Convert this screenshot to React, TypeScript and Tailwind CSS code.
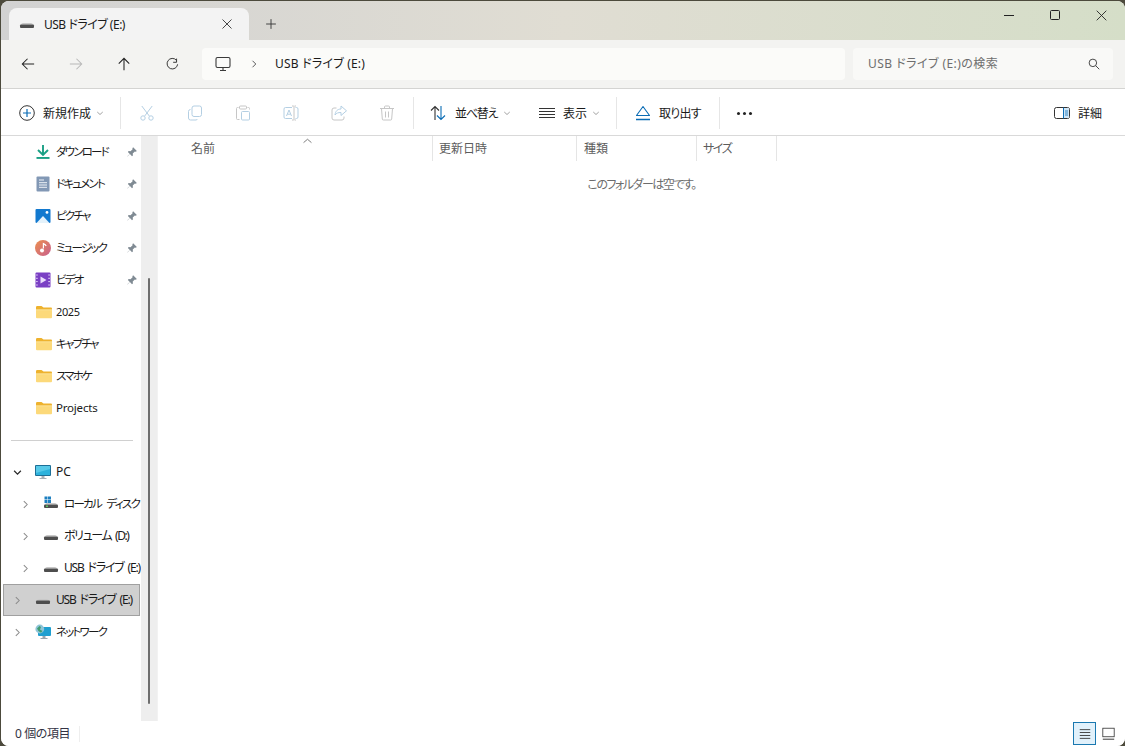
import React from "react";

const FONT = "font-['Noto_Sans','Noto_Sans_CJK_JP',sans-serif] [font-feature-settings:'palt']";

function Svg({ s = 16, children, className = "" }: { s?: number; children: React.ReactNode; className?: string }) {
  return (
    <svg width={s} height={s} viewBox="0 0 16 16" fill="none" className={"shrink-0 " + className}>
      {children}
    </svg>
  );
}

const Chev = () => (
  <Svg s={8}>
    <path d="M2.5 6 8 11l5.5-5" stroke="#8a8a8a" strokeWidth="1.6" />
  </Svg>
);

function Drive({ grid = false }: { grid?: boolean }) {
  return (
    <svg width="16" height="16" viewBox="0 0 16 16" className="shrink-0">
      {grid && (
        <g fill="#1c7fc0">
          <rect x="1.5" y="0.5" width="3" height="3" />
          <rect x="5" y="0.5" width="3" height="3" />
          <rect x="1.5" y="4" width="3" height="3" />
          <rect x="5" y="4" width="3" height="3" />
        </g>
      )}
      <path d="M2 8.5 Q2.4 7 4 7H12Q13.6 7 14 8.5Z" fill="#c8c8c8" />
      <rect x="1" y="8.5" width="14" height="3.5" rx="1" fill="#4e4e4e" />
      {grid && <rect x="3" y="9.5" width="2" height="1.5" fill="#58c060" />}
    </svg>
  );
}

function Folder() {
  return (
    <svg width="18" height="16" viewBox="0 0 18 16" className="shrink-0">
      <path d="M1 3.2Q1 2 2.2 2H6.5L8.5 3.6H16Q17 3.6 17 4.8V6H1Z" fill="#eeb22e" />
      <path d="M1 5.6H17V13.2Q17 14.2 16 14.2H2Q1 14.2 1 13.2Z" fill="#fcd97a" />
      <path d="M1 5.6H17V6.2H1Z" fill="#fbe9ae" />
    </svg>
  );
}

const Pin = () => (
  <Svg s={12}>
    <path d="M9.5 1.5 14.5 6.5 13 7.5 11.8 7.2 9 10 9.2 12.5 8 13.5 5.3 10.8 2 14 1.8 13.8 5 10.5 2.5 8 3.5 6.8 6 7 8.8 4.2 8.5 3Z" fill="#7f8a93" />
  </Svg>
);

const icons: Record<string, React.ReactNode> = {
  download: (
    <Svg>
      <path d="M8 1v9.5M3 6 8 11l5-5" stroke="#1aa085" strokeWidth="1.9" />
      <rect x="1.5" y="13" width="13" height="1.9" fill="#1aa085" />
    </Svg>
  ),
  doc: (
    <Svg>
      <rect x="1.5" y="0.5" width="13" height="15" rx="1" fill="#8298b5" />
      <path d="M4 4h5M4 6.7h8M4 9h8M4 11.3h8" stroke="#eef2f7" strokeWidth="1" />
    </Svg>
  ),
  pic: (
    <Svg>
      <rect x="0.5" y="1" width="15" height="14" rx="1" fill="#1279cf" />
      <path d="M1.5 15 8 8l6.5 7Z" fill="#e4f2fb" />
      <circle cx="12" cy="4.4" r="1.4" fill="#fff" />
    </Svg>
  ),
  music: (
    <svg width="16" height="16" viewBox="0 0 16 16" className="shrink-0">
      <defs>
        <linearGradient id="mus" x1="0" y1="0" x2="1" y2="1">
          <stop offset="0" stopColor="#ec8f4e" />
          <stop offset="1" stopColor="#c85f8e" />
        </linearGradient>
      </defs>
      <circle cx="8" cy="8" r="8" fill="url(#mus)" />
      <path d="M8.4 8.5V3.6c1.2.6 2.3 1.2 2.8 2.4" stroke="#fff" strokeWidth="1.2" fill="none" />
      <circle cx="7" cy="10.6" r="2" fill="#fff" />
    </svg>
  ),
  video: (
    <Svg>
      <rect x="0.5" y="0.5" width="15" height="15" rx="1" fill="#7a3fc4" />
      <path d="M1 3h1.8M1 6.3h1.8M1 9.6h1.8M1 13h1.8M13.2 3H15M13.2 6.3H15M13.2 9.6H15M13.2 13H15" stroke="#d9c5f3" strokeWidth="1" />
      <path d="M5.5 4.5 11.5 8l-6 3.5Z" fill="#e9dcfb" />
    </Svg>
  ),
  pc: (
    <Svg>
      <rect x="0" y="1" width="16" height="11" rx="1" fill="#1c6f97" />
      <rect x="1" y="2" width="14" height="9" fill="#2db2dc" />
      <path d="M1 2h14v3L1 9Z" fill="#7adcf2" opacity=".55" />
      <path d="M6.5 12h3v2h-3Z" fill="#a8b0b6" />
      <path d="M4.5 14.5h7" stroke="#a8b0b6" strokeWidth="1" />
    </Svg>
  ),
  net: (
    <Svg>
      <rect x="3" y="3" width="13" height="9" rx="1" fill="#1f9fd0" />
      <path d="M7.5 12h3v2h-3ZM5.5 14h7v1h-7Z" fill="#9aa5ad" />
      <circle cx="4.8" cy="5" r="4.4" fill="#8fc4d8" />
      <path d="M2 4.5 4.5 2 6 3 5 5.5 7.5 7 6 8.8 3.5 7Z" fill="#3f9c6f" />
    </Svg>
  ),
};

function NavRow({ icon, label, pin, text }: { icon: React.ReactNode; label: string; pin?: boolean; text: string }) {
  return (
    <div className="flex h-8 items-center pl-[34px] pr-[3px]">
      <span className="flex w-[21px] shrink-0">{icon}</span>
      <span className={"flex-1 whitespace-nowrap text-[#1a1a1a] " + text}>{label}</span>
      {pin && <span className="flex"><Pin /></span>}
    </div>
  );
}

function TreeRow({ label, icon, indent, expanded, text }: { label: string; icon: React.ReactNode; indent: boolean; expanded?: boolean; text: string }) {
  return (
    <div className={"flex h-8 items-center " + (indent ? "pl-[20px]" : "pl-[12px]")}>
      <span className="flex w-[22px] shrink-0">
        <Svg s={9}>
          {expanded ? (
            <path d="M2 5l6 6 6-6" stroke="#2a2a2a" strokeWidth="2.2" />
          ) : (
            <path d="M5 2l6 6-6 6" stroke="#8a8a8a" strokeWidth="1.8" />
          )}
        </Svg>
      </span>
      <span className="flex w-[21px] shrink-0">{icon}</span>
      <span className={"whitespace-nowrap text-[#1a1a1a] " + text}>{label}</span>
    </div>
  );
}

function Tool({ w, children }: { w: number; children: React.ReactNode }) {
  return (
    <div className="flex h-full shrink-0 items-center justify-center" style={{ width: w }}>
      {children}
    </div>
  );
}

const Div = () => <div className="h-[32px] w-px shrink-0 bg-[#e6e6e6]" />;

const disabled = "#b4cfe3";
const disabled2 = "#c6c6c6";

const kana = "text-[11.5px] tracking-[-1.8px]";
const usb = "text-[12px] tracking-[-1.2px] [word-spacing:2px]";

export default function App() {
  return (
    <div className={"h-[746px] w-[1125px] overflow-hidden bg-[#4c4a3c] " + FONT}>
      <div className="ml-px mt-px flex h-[745px] w-[1124px] flex-col overflow-hidden rounded-[8px] bg-white">
        {/* title bar */}
        <div className="flex h-[39px] shrink-0 bg-gradient-to-r from-[#d2d2d2] via-[#e0ddd3] to-[#d5dec8]">
          <div className="ml-[8px] mt-[7px] flex h-[32px] w-[240px] items-center rounded-t-[8px] bg-[#f3f3f3] pl-[10px]">
            <Drive />
            <span className="ml-[9px] flex-1 whitespace-nowrap pt-px text-[12px] tracking-[-0.5px] text-[#1a1a1a]">USB ドライブ (E:)</span>
            <span className="mr-[16px] flex">
              <Svg s={12}>
                <path d="M2 2l12 12M14 2 2 14" stroke="#333" strokeWidth="1.2" />
              </Svg>
            </span>
          </div>
          <div className="ml-[16px] mt-[7px] flex h-[32px] items-center">
            <Svg s={12}>
              <path d="M8 1.5v13M1.5 8h13" stroke="#333" strokeWidth="1.2" />
            </Svg>
          </div>
          <div className="ml-auto flex pr-px pt-[2px]">
            <div className="flex h-[24px] w-[46px] items-center justify-center">
              <div className="h-px w-[10px] bg-[#222]" />
            </div>
            <div className="flex h-[24px] w-[46px] items-center justify-center">
              <div className="h-[10px] w-[10px] rounded-[1.5px] border border-[#222]" />
            </div>
            <div className="flex h-[24px] w-[46px] items-center justify-center">
              <Svg s={11}>
                <path d="M1 1l14 14M15 1 1 15" stroke="#222" strokeWidth="1.3" />
              </Svg>
            </div>
          </div>
        </div>
        {/* address row */}
        <div className="flex h-[49px] shrink-0 items-center border-b border-[#d4d4d2] bg-[#f3f3f1]">
          <div className="ml-[3px] flex">
            <Tool w={48}>
              <Svg s={14}>
                <path d="M15 8H1.5M7.5 2l-6 6 6 6" stroke="#222" strokeWidth="1.2" />
              </Svg>
            </Tool>
            <Tool w={48}>
              <Svg s={14}>
                <path d="M1 8h13.5M8.5 2l6 6-6 6" stroke="#b8b8b8" strokeWidth="1.2" />
              </Svg>
            </Tool>
            <Tool w={48}>
              <Svg s={14}>
                <path d="M8 15V1.5M2 7.5l6-6 6 6" stroke="#222" strokeWidth="1.2" />
              </Svg>
            </Tool>
            <Tool w={48}>
              <Svg s={13}>
                <path d="M13 2v4.5H8.8M14.3 9a6.5 6.5 0 1 1-1.5-5" stroke="#333" strokeWidth="1.2" />
              </Svg>
            </Tool>
          </div>
          <div className="ml-[6px] flex h-[32px] w-[643px] items-center rounded-[4px] bg-[#fbfbf9] pl-[13px]">
            <Svg>
              <rect x="1" y="1.5" width="14" height="10" rx="1.5" stroke="#3a3a3a" strokeWidth="1.1" />
              <path d="M8 11.5v3M5 14.5h6" stroke="#3a3a3a" strokeWidth="1.1" />
            </Svg>
            <span className="ml-[19px] flex">
              <Svg s={8}>
                <path d="M5 1.5 11.5 8 5 14.5" stroke="#333" strokeWidth="1.6" />
              </Svg>
            </span>
            <span className="ml-[17px] whitespace-nowrap text-[12px] tracking-[0.2px] text-[#1a1a1a]">USB ドライブ (E:)</span>
          </div>
          <div className="ml-[8px] flex h-[32px] w-[260px] items-center rounded-[4px] bg-[#f9f9f7] pl-[15px] pr-[13px]">
            <span className="flex-1 whitespace-nowrap text-[12px] tracking-[0.45px] text-[#6e6e6e]">USB ドライブ (E:)の検索</span>
            <Svg s={12}>
              <circle cx="6.5" cy="6.5" r="5" stroke="#444" strokeWidth="1.3" />
              <path d="M10.2 10.2 15 15" stroke="#444" strokeWidth="1.3" />
            </Svg>
          </div>
        </div>
        {/* toolbar */}
        <div className="flex h-[47px] shrink-0 items-center border-b border-[#d9d9d9] bg-white pt-[2px]">
          <div className="flex h-full w-[119px] shrink-0 items-center pl-[18px]">
            <Svg>
              <circle cx="8" cy="8" r="7.3" stroke="#333" strokeWidth="1" />
              <path d="M8 4v8M4 8h8" stroke="#0a6cb5" strokeWidth="1.2" />
            </Svg>
            <span className="ml-[8px] whitespace-nowrap pt-px text-[12px] text-[#1a1a1a]">新規作成</span>
            <span className="ml-[5px] flex"><Chev /></span>
          </div>
          <Div />
          <div className="ml-[2px] flex h-full">
            <Tool w={48}>
              <Svg>
                <path d="M2.8 1l7.5 10M13.2 1 5.7 11" stroke={disabled} strokeWidth="1" />
                <circle cx="4" cy="13" r="2.2" stroke={disabled} />
                <circle cx="12" cy="13" r="2.2" stroke={disabled} />
              </Svg>
            </Tool>
            <Tool w={48}>
              <Svg>
                <rect x="5" y="1" width="9.5" height="10.5" rx="2" stroke={disabled} />
                <path d="M3.5 4.5A2 2 0 0 0 1.5 6.5v6.5a2 2 0 0 0 2 2h5.5a2 2 0 0 0 1.5-1" stroke={disabled} />
              </Svg>
            </Tool>
            <Tool w={48}>
              <Svg>
                <path d="M3.5 2.5h-1a1 1 0 0 0-1 1v10a1 1 0 0 0 1 1h2M12.5 2.5h1a1 1 0 0 1 1 1v1" stroke={disabled2} />
                <rect x="4.5" y="1" width="7" height="3" rx="1" stroke={disabled2} />
                <rect x="6.5" y="6.5" width="8" height="8.5" rx="1" stroke={disabled} />
              </Svg>
            </Tool>
            <Tool w={48}>
              <Svg>
                <path d="M9 2.5H2.5a1.5 1.5 0 0 0-1.5 1.5v8a1.5 1.5 0 0 0 1.5 1.5H9M12.5 2.5h1a1.5 1.5 0 0 1 1.5 1.5v8a1.5 1.5 0 0 1-1.5 1.5h-1" stroke={disabled} />
                <path d="M3.5 11 6 5l2.5 6M4.4 9.2h3.2" stroke={disabled} />
                <path d="M9 1h1.5a.5.5 0 0 1 .5.5v13a.5.5 0 0 1-.5.5H9M13 1h-1.5M13 15h-1.5" stroke={disabled2} />
              </Svg>
            </Tool>
            <Tool w={48}>
              <Svg>
                <path d="M5.5 3H3a2 2 0 0 0-2 2v8a2 2 0 0 0 2 2h8a2 2 0 0 0 2-2v-1.5" stroke={disabled2} />
                <path d="M10 1v3C6.5 4 4.5 6 4 10c1.5-2 3-2.5 6-2.5v3l5.5-4.7Z" stroke={disabled} strokeLinejoin="round" />
              </Svg>
            </Tool>
            <Tool w={48}>
              <Svg>
                <path d="M1 3.5h14M5.5 3.5V2a1 1 0 0 1 1-1h3a1 1 0 0 1 1 1v1.5M2.5 3.5l.8 10.5a1 1 0 0 0 1 1h7.4a1 1 0 0 0 1-1l.8-10.5M6.5 6.5v6M9.5 6.5v6" stroke={disabled2} />
              </Svg>
            </Tool>
          </div>
          <div className="ml-[2px]"><Div /></div>
          <div className="flex h-full w-[102px] shrink-0 items-center pl-[16px]">
            <Svg>
              <path d="M5 15V1.5M1 5.5l4-4 4 4" stroke="#333" strokeWidth="1.1" />
              <path d="M11 1v13.5M7 10.5l4 4 4-4" stroke="#0a6cb5" strokeWidth="1.1" />
            </Svg>
            <span className="ml-[9px] whitespace-nowrap pt-px text-[12px] tracking-[-1.2px] text-[#1a1a1a]">並べ替え</span>
            <span className="ml-[6px] flex"><Chev /></span>
          </div>
          <div className="flex h-full w-[100px] shrink-0 items-center pl-[23px]">
            <Svg>
              <path d="M0 3.5h16M0 6.5h16M0 9.5h16M0 12.5h16" stroke="#333" strokeWidth="1" />
            </Svg>
            <span className="ml-[8px] whitespace-nowrap pt-px text-[12px] text-[#1a1a1a]">表示</span>
            <span className="ml-[5px] flex"><Chev /></span>
          </div>
          <Div />
          <div className="flex h-full w-[102px] shrink-0 items-center pl-[18px]">
            <Svg>
              <path d="M8 1.5 14.5 10.5H1.5Z" stroke="#0a6cb5" strokeWidth="1.1" strokeLinejoin="round" />
              <path d="M1 14.5h14" stroke="#0a6cb5" strokeWidth="1.3" />
            </Svg>
            <span className="ml-[8px] whitespace-nowrap pt-px text-[12px] tracking-[-0.8px] text-[#1a1a1a]">取り出す</span>
          </div>
          <Div />
          <div className="flex h-full w-[48px] shrink-0 items-center justify-center gap-[3px]">
            <div className="h-[3px] w-[3px] rounded-full bg-[#222]" />
            <div className="h-[3px] w-[3px] rounded-full bg-[#222]" />
            <div className="h-[3px] w-[3px] rounded-full bg-[#222]" />
          </div>
          <div className="ml-auto flex items-center pr-[23px]">
            <Svg>
              <rect x="0.5" y="2.5" width="15" height="11" rx="2" stroke="#333" />
              <rect x="9.5" y="3" width="5.5" height="10" fill="#cfe6f7" />
              <path d="M9.5 2.5v11" stroke="#0a6cb5" />
              <path d="M11 6h3M11 8h3M11 10h3" stroke="#0a6cb5" strokeWidth=".8" />
            </Svg>
            <span className="ml-[8px] whitespace-nowrap pt-px text-[12px] text-[#1a1a1a]">詳細</span>
          </div>
        </div>
        {/* body */}
        <div className="flex min-h-0 flex-1">
          <div className="w-[140px] shrink-0">
            <NavRow icon={icons.download} label="ダウンロード" pin text={kana} />
            <NavRow icon={icons.doc} label="ドキュメント" pin text={kana} />
            <NavRow icon={icons.pic} label="ピクチャ" pin text={kana} />
            <NavRow icon={icons.music} label="ミュージック" pin text={kana} />
            <NavRow icon={icons.video} label="ビデオ" pin text={kana} />
            <NavRow icon={<Folder />} label="2025" text="text-[11px] tracking-[-0.4px]" />
            <NavRow icon={<Folder />} label="キャプチャ" text={kana} />
            <NavRow icon={<Folder />} label="スマホケ" text={kana} />
            <NavRow icon={<Folder />} label="Projects" text="text-[11.5px] tracking-[-0.2px]" />
            <div className="flex h-8 items-center pl-[10px] pr-[8px]">
              <div className="h-px w-full bg-[#d0d0d0]" />
            </div>
            <TreeRow indent={false} expanded icon={icons.pc} label="PC" text="text-[12px]" />
            <TreeRow indent icon={<Drive grid />} label="ローカル ディスク" text="text-[11.5px] tracking-[-1.7px] [word-spacing:4px]" />
            <TreeRow indent icon={<Drive />} label="ボリューム (D:)" text="text-[12px] tracking-[-1.4px] [word-spacing:2px]" />
            <div className="w-[140px] overflow-hidden">
              <TreeRow indent icon={<Drive />} label="USB ドライブ (E:)" text={usb} />
            </div>
            <div className="ml-[2px] mr-px h-8 border border-[#a0a0a0] bg-[#d0d0d0]">
              <div className="-ml-[3px] -mt-px">
                <TreeRow indent={false} icon={<Drive />} label="USB ドライブ (E:)" text={usb} />
              </div>
            </div>
            <TreeRow indent={false} icon={icons.net} label="ネットワーク" text={kana} />
          </div>
          <div className="w-[16px] shrink-0 bg-[#eeeeee] pl-[7px] pt-[142px]">
            <div className="h-[426px] w-[2px] rounded-full bg-[#6e6e6e]" />
          </div>
          <div className="min-w-0 flex-1 border-l border-[#f2f2f2]">
            <div className="flex h-[25px] text-[12px] text-[#5c5c5c]">
              <div className="flex w-[274px] items-start pl-[33px] pt-[4px]">
                <span>名前</span>
                <span className="ml-[88px] -mt-[3px] flex">
                  <Svg s={9}>
                    <path d="M1 10l7-6 7 6" stroke="#666" strokeWidth="1.5" />
                  </Svg>
                </span>
              </div>
              <div className="w-[144px] border-l border-[#e5e5e5] pl-[6px] pt-[4px]">更新日時</div>
              <div className="w-[120px] border-l border-[#e5e5e5] pl-[7px] pt-[4px]">種類</div>
              <div className="w-[81px] border-r border-l border-[#e5e5e5] pl-[6px] pt-[4px] tracking-[-1.5px]">サイズ</div>
            </div>
            <div className="pt-[15px] text-center text-[12px] tracking-[-1.5px] text-[#6c6c6c]">このフォルダーは空です。</div>
          </div>
        </div>
        {/* status */}
        <div className="flex h-[25px] shrink-0 items-center bg-white">
          <span className="ml-[14px] whitespace-nowrap text-[12px] tracking-[-0.4px] text-[#334]">0 個の項目</span>
          <div className="ml-[9px] h-[16px] w-px bg-[#eeeeee]" />
          <div className="ml-auto flex items-center pr-[5px]">
            <div className="flex h-[23px] w-[23px] items-center justify-center border border-[#1a78b0] bg-[#e1f1fb]">
              <Svg s={14}>
                <path d="M2 3h12M2 6.3h12M2 9.7h12M2 13h12" stroke="#333" strokeWidth="1" />
              </Svg>
            </div>
            <div className="ml-[1px] flex h-[23px] w-[23px] items-center justify-center">
              <Svg s={13}>
                <rect x="1" y="1.5" width="14" height="10.5" stroke="#333" />
                <path d="M1 15h14" stroke="#333" strokeWidth="1.2" />
              </Svg>
            </div>
          </div>
        </div>
      </div>
    </div>
  );
}
